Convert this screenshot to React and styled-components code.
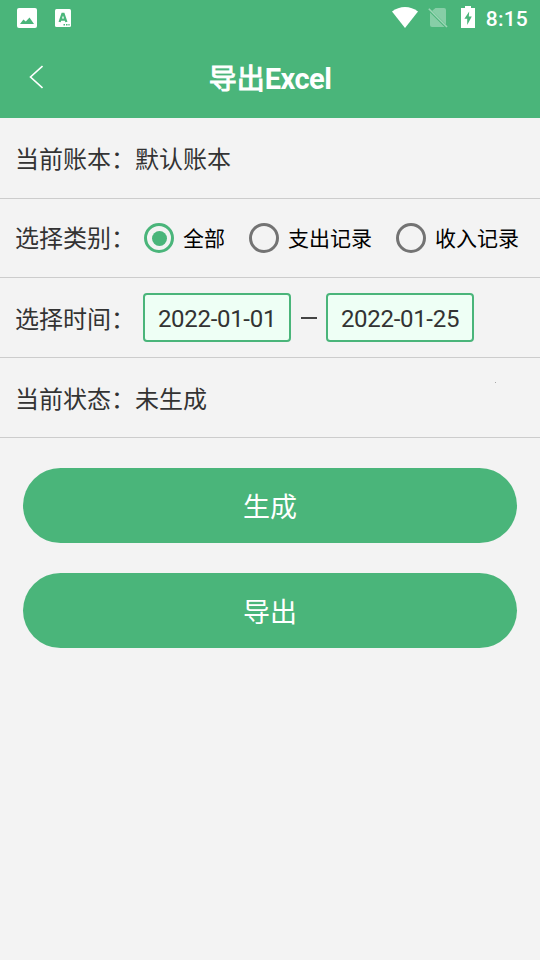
import React, { useState } from "react";
import styled, { createGlobalStyle } from "styled-components";

const GlobalStyle = createGlobalStyle`
  * {
    box-sizing: border-box;
  }

  body {
    margin: 0;
    background: #f3f3f3;
    font-family: Roboto, "Noto Sans CJK SC", sans-serif;
  }
`;

const Screen = styled.div`
  width: 540px;
  height: 960px;
  overflow: hidden;
  background: #f3f3f3;
  color: #333333;
`;

const StatusBar = styled.div`
  display: flex;
  align-items: center;
  justify-content: space-between;
  height: 36px;
  padding: 0 12px 0 17px;
  background: #4ab57a;
`;

const StatusGroup = styled.div`
  display: flex;
  align-items: center;
  height: 36px;

  svg {
    display: block;
  }
`;

const Clock = styled.span`
  margin-left: 11px;
  padding-top: 2px;
  font-size: 21px;
  font-weight: 500;
  line-height: 24px;
  letter-spacing: 0.2px;
  color: #ffffff;
`;

const NavBar = styled.header`
  display: grid;
  grid-template-columns: 80px 1fr 80px;
  align-items: center;
  height: 82px;
  background: #4ab57a;
`;

const BackButton = styled.button`
  display: flex;
  width: 44px;
  height: 44px;
  margin-left: 14px;
  padding: 10px 15px;
  border: 0;
  background: none;
`;

const Title = styled.h1`
  margin: 0;
  padding-top: 5px;
  font-size: 28px;
  font-weight: 400;
  line-height: 40px;
  text-align: center;
  color: #ffffff;
  -webkit-text-stroke: 1px #ffffff;
`;

const Latin = styled.span`
  font-size: 29px;
  font-weight: bold;
  letter-spacing: -0.5px;
  -webkit-text-stroke: 0;
`;

const Row = styled.div`
  display: flex;
  align-items: center;
  height: ${props => props.$height || 80}px;
  padding: 0 15px;
  border-bottom: 1px solid #cccccc;
  font-size: 24px;
  line-height: 36px;
  white-space: nowrap;
`;

const Label = styled.span`
  width: 120px;
  padding-top: ${props => props.$top || 4}px;
`;

const Value = styled.span`
  padding-top: 4px;
`;

const RadioGroup = styled.div`
  display: flex;
  gap: 24px;
  margin-left: 9px;
`;

const RadioLabel = styled.label`
  display: flex;
  align-items: center;
  gap: 9px;
  height: 30px;
  font-size: 21px;
  line-height: 30px;
  color: #000000;
`;

const RadioText = styled.span`
  padding-top: 2px;
`;

const Radio = styled.input`
  appearance: none;
  display: grid;
  place-items: center;
  width: 30px;
  height: 30px;
  margin: 0;
  border: 3px solid #737373;
  border-radius: 50%;

  &:checked {
    border-color: #4ab57a;
  }

  &:checked::before {
    content: "";
    width: 15px;
    height: 15px;
    border-radius: 50%;
    background: #4ab57a;
  }
`;

const DateBox = styled.div`
  width: 148px;
  height: 49px;
  margin-left: ${props => props.$offset || 0}px;
  border: 2px solid #4ab57a;
  border-radius: 4px;
  background: #eefff5;
  line-height: 49px;
  letter-spacing: -0.3px;
  text-align: center;
`;

const Dash = styled.span`
  width: 16px;
  height: 2px;
  margin: 0 9px 0 10px;
  background: #444444;
`;

const StatusDot = styled.span`
  align-self: flex-start;
  width: 1px;
  height: 1px;
  margin: 24px 29px 0 auto;
  background: #a8a8a8;
`;

const Actions = styled.div`
  display: flex;
  flex-direction: column;
  gap: 30px;
  padding: 30px 23px;
`;

const ActionButton = styled.button`
  height: 75px;
  padding: 4px 0 0;
  border: 0;
  border-radius: 38px;
  background: #4ab57a;
  font-family: inherit;
  font-size: 27px;
  line-height: 40px;
  color: #ffffff;
`;

const ImageIcon = () => (
  <svg width="20" height="20" viewBox="0 0 20 20">
    <rect width="20" height="20" rx="2" fill="#fff" />
    <path d="M3 16L6.4 11.5L8.8 13.6L12.5 9.5L17 16Z" fill="#4ab57a" />
  </svg>
);

const LetterIcon = () => (
  <svg width="16" height="18" viewBox="0 0 16 18">
    <rect width="16" height="18" rx="1.5" fill="#fff" />
    <path
      d="M4.6 13L7.4 4.8H8.6L11.4 13M5.8 10.6H10.2"
      fill="none"
      stroke="#4ab57a"
      strokeWidth="2.2"
    />
    <path d="M8.5 15h1.5v1.5H8.5zM11 15h1.5v1.5H11zM13.4 15h1.2v1.5h-1.2z" fill="#4ab57a" />
  </svg>
);

const WifiIcon = () => (
  <svg width="26" height="21" viewBox="0 0 26 21">
    <path d="M0 4.5C7.5 -1.5 18.5 -1.5 26 4.5L13 21Z" fill="#fff" />
  </svg>
);

const NoSimIcon = () => (
  <svg width="20" height="21" viewBox="0 0 20 21">
    <path d="M7.5 1H16Q18 1 18 3V17.4L4.2 3.8Z" fill="#fff" opacity="0.34" />
    <path d="M2 5.5L16.5 20H4Q2 20 2 18Z" fill="#fff" opacity="0.34" />
    <path d="M0.8 1.8L19 20" stroke="#fff" strokeWidth="1.6" opacity="0.45" />
  </svg>
);

const BatteryIcon = () => (
  <svg width="14" height="22" viewBox="0 0 14 22">
    <path d="M4 0H10V2H14V22H0V2H4Z" fill="#fff" />
    <path d="M8.2 5.5L3.4 12.8H6.2V19L10.8 10.5H7.8Z" fill="#4ab57a" />
  </svg>
);

const BackIcon = () => (
  <svg width="14" height="24" viewBox="0 0 14 24">
    <path d="M13.5 1L1.5 12L13.5 23" fill="none" stroke="#fff" strokeWidth="1.6" />
  </svg>
);

const StatusIcons = styled(StatusGroup)`
  gap: 18px;
`;

const SystemIcons = styled(StatusGroup)`
  svg {
    margin-bottom: 1px;
  }

  svg + svg {
    margin-left: 10px;
  }

  svg:nth-of-type(3) {
    margin-left: 13px;
    margin-bottom: 2px;
  }
`;

const categories = ["全部", "支出记录", "收入记录"];

const App = () => {
  const [category, setCategory] = useState(categories[0]);

  return (
    <Screen>
      <GlobalStyle />
      <StatusBar>
        <StatusIcons>
          <ImageIcon />
          <LetterIcon />
        </StatusIcons>
        <SystemIcons>
          <WifiIcon />
          <NoSimIcon />
          <BatteryIcon />
          <Clock>8:15</Clock>
        </SystemIcons>
      </StatusBar>
      <NavBar>
        <BackButton>
          <BackIcon />
        </BackButton>
        <Title>
          导出<Latin>Excel</Latin>
        </Title>
      </NavBar>
      <Row $height={81}>
        <Label>当前账本：</Label>
        <Value>默认账本</Value>
      </Row>
      <Row $height={79}>
        <Label $top={2}>选择类别：</Label>
        <RadioGroup>
          {categories.map(name => (
            <RadioLabel key={name}>
              <Radio
                type="radio"
                name="category"
                checked={category === name}
                onChange={() => setCategory(name)}
              />
              <RadioText>{name}</RadioText>
            </RadioLabel>
          ))}
        </RadioGroup>
      </Row>
      <Row>
        <Label>选择时间：</Label>
        <DateBox $offset={8}>2022-01-01</DateBox>
        <Dash />
        <DateBox>2022-01-25</DateBox>
      </Row>
      <Row>
        <Label>当前状态：</Label>
        <Value>未生成</Value>
        <StatusDot />
      </Row>
      <Actions>
        <ActionButton>生成</ActionButton>
        <ActionButton>导出</ActionButton>
      </Actions>
    </Screen>
  );
};

export default App;
